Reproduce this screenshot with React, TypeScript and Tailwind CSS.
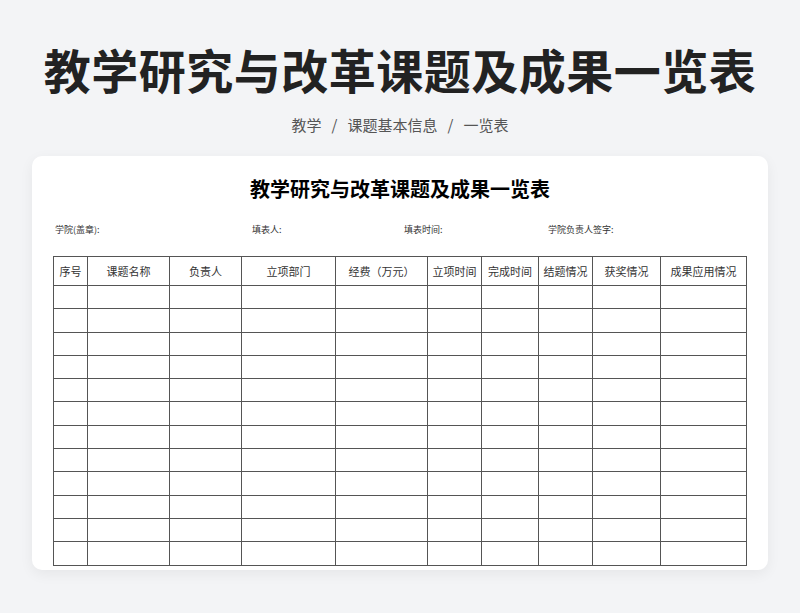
const cols = [
  ["序号", 34], ["课题名称", 82], ["负责人", 72], ["立项部门", 94], ["经费（万元）", 92],
  ["立项时间", 54], ["完成时间", 57], ["结题情况", 54], ["获奖情况", 68], ["成果应用情况", 86],
] as const;

export default function App() {
  const font = { fontFamily: '"Noto Sans CJK SC", "Noto Sans", sans-serif' };
  return (
    <div className="w-[800px] h-[613px] bg-[#f3f4f6] flex flex-col items-center overflow-hidden" style={font}>
      <h1 className="mt-[38px] text-[47px] leading-[62px] font-bold text-[#222] tracking-[0.5px]">教学研究与改革课题及成果一览表</h1>
      <div className="mt-[14px] text-[15px] leading-[22px] text-[#555] flex gap-[10px]">
        <span>教学</span><span>/</span><span>课题基本信息</span><span>/</span><span>一览表</span>
      </div>
      <div className="mt-[20px] w-[736px] h-[414px] bg-white rounded-[10px] shadow-[0_4px_14px_rgba(0,0,0,0.06)] flex flex-col items-center">
        <div className="mt-[18px] text-[20px] leading-[30px] font-bold text-black">教学研究与改革课题及成果一览表</div>
        <div className="mt-[20px] w-full pl-[23px] text-[9px] leading-[12px] text-[#333] flex">
          <span className="w-[197px]">学院(盖章):</span>
          <span className="w-[152px]">填表人:</span>
          <span className="w-[144px]">填表时间:</span>
          <span>学院负责人签字:</span>
        </div>
        <table className="mt-[20px] border-collapse border border-[#555] text-[11px] text-[#333]">
          <thead>
            <tr className="h-[29px]">
              {cols.map(([t, w]) => (
                <th key={t} style={{ width: w }} className="border border-[#555] font-normal p-0 text-center">{t}</th>
              ))}
            </tr>
          </thead>
          <tbody>
            {Array.from({ length: 12 }).map((_, i) => (
              <tr key={i} className="h-[23.3px]">
                {cols.map(([t]) => <td key={t} className="border border-[#555] p-0"></td>)}
              </tr>
            ))}
          </tbody>
        </table>
      </div>
    </div>
  );
}
